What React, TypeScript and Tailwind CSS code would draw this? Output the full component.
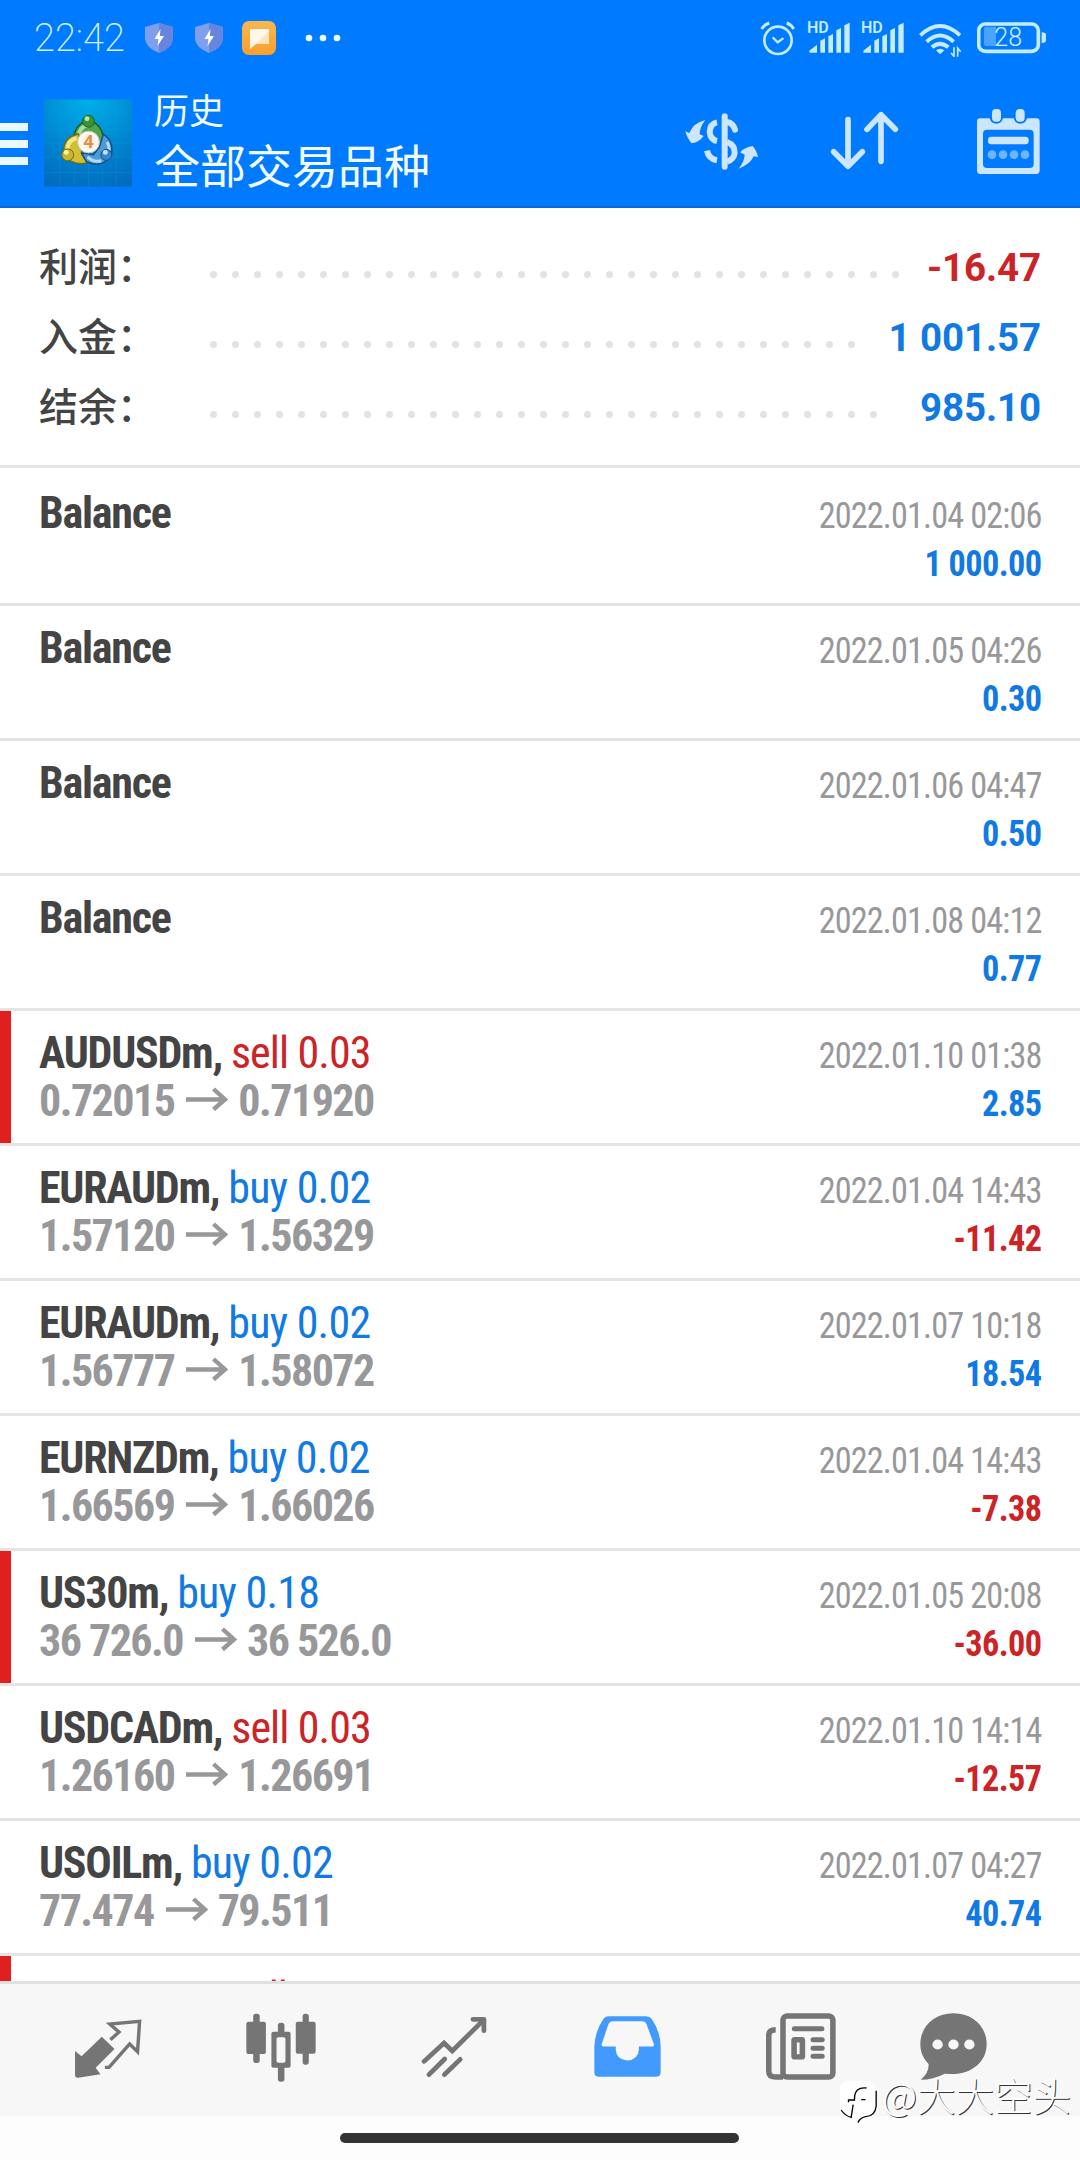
import React, { ReactNode } from "react";

type Deal = {
  symbol: string;
  side?: "buy" | "sell";
  volume?: string;
  open?: string;
  close?: string;
  time: string;
  profit: string;
  marked?: boolean;
};

const deals: Deal[] = [
  { symbol: "Balance", time: "2022.01.04 02:06", profit: "1 000.00" },
  { symbol: "Balance", time: "2022.01.05 04:26", profit: "0.30" },
  { symbol: "Balance", time: "2022.01.06 04:47", profit: "0.50" },
  { symbol: "Balance", time: "2022.01.08 04:12", profit: "0.77" },
  { symbol: "AUDUSDm", side: "sell", volume: "0.03", open: "0.72015", close: "0.71920", time: "2022.01.10 01:38", profit: "2.85", marked: true },
  { symbol: "EURAUDm", side: "buy", volume: "0.02", open: "1.57120", close: "1.56329", time: "2022.01.04 14:43", profit: "-11.42" },
  { symbol: "EURAUDm", side: "buy", volume: "0.02", open: "1.56777", close: "1.58072", time: "2022.01.07 10:18", profit: "18.54" },
  { symbol: "EURNZDm", side: "buy", volume: "0.02", open: "1.66569", close: "1.66026", time: "2022.01.04 14:43", profit: "-7.38" },
  { symbol: "US30m", side: "buy", volume: "0.18", open: "36 726.0", close: "36 526.0", time: "2022.01.05 20:08", profit: "-36.00", marked: true },
  { symbol: "USDCADm", side: "sell", volume: "0.03", open: "1.26160", close: "1.26691", time: "2022.01.10 14:14", profit: "-12.57" },
  { symbol: "USOILm", side: "buy", volume: "0.02", open: "77.474", close: "79.511", time: "2022.01.07 04:27", profit: "40.74" },
];

const summary = [
  { label: "利润：", value: "-16.47", dots: 32 },
  { label: "入金：", value: "1 001.57", dots: 30 },
  { label: "结余：", value: "985.10", dots: 31 },
];

const amountColor = (value: string) => (value.startsWith("-") ? "text-[#cc2327]" : "text-[#117ae2]");

const Shield = () => (
  <svg width="28" height="30" viewBox="0 0 28 30">
    <path d="M14 0 28 4V16Q27 25 14 30Q1 25 0 16V4Z" fill="#7f9eee" />
    <path d="M14 0 28 4V16Q27 25 14 30Z" fill="#6585de" />
    <path d="M15.500 6 9.500 16H13.500L12.500 23 19 13H14.800Z" fill="#fff" />
  </svg>
);

const Signal = () => (
  <svg className="overflow-visible" width="42" height="32" viewBox="503 62 126 96" fill="#c3ecff">
    <text x="500" y="99" fontSize="48" fontWeight="600" fontFamily="Roboto, sans-serif">HD</text>
    <path d="M507 157V151L530 133V157ZM540 157V121L554 114V157ZM564 157V108L578 101V157ZM588 157V90L602 83V157ZM612 157V75L628 67V157Z" />
  </svg>
);

const StatusBar = () => (
  <div className="flex h-[76px] items-center pl-[34px] pr-[33px]">
    <span className="w-[111px] font-[Roboto,sans-serif] text-[38px] font-extralight leading-[76px] text-[#d5f3ff]">22:42</span>
    <Shield />
    <div className="w-[22px]" />
    <Shield />
    <svg className="ml-[19px]" width="34" height="34" viewBox="0 0 34 34">
      <defs>
        <linearGradient id="note" x1="0" y1="0" x2="0" y2="1">
          <stop offset="0" stopColor="#f7b84e" />
          <stop offset="1" stopColor="#fb9f2c" />
        </linearGradient>
      </defs>
      <rect width="34" height="34" rx="7" fill="url(#note)" />
      <path d="M8 9Q8 8 9 8H26Q27 8 27 9V22Q27 23 26 23H14L8 28Z" fill="#fff8ea" />
      <path d="M27 10V22Q27 23 26 23H14Z" fill="#fde3bb" />
    </svg>
    <svg className="ml-[29px]" width="36" height="8" viewBox="0 0 36 8" fill="#eafcff">
      <circle cx="4" cy="4" r="3.300" />
      <circle cx="18" cy="4" r="3.300" />
      <circle cx="32" cy="4" r="3.300" />
    </svg>
    <div className="flex-1" />
    <svg width="35" height="35" viewBox="360 62 105 105" fill="none" stroke="#c3ecff" strokeWidth="9" strokeLinecap="round">
      <circle cx="414" cy="120" r="41" strokeWidth="8" />
      <path d="M400 113 413 126 428 115" strokeWidth="7" strokeLinejoin="round" />
      <path d="M365 86Q372 73 388 68M440 68Q454 73 461 86" strokeLinecap="butt" />
    </svg>
    <div className="-mt-[3px] ml-[13px] flex gap-3">
      <Signal />
      <Signal />
    </div>
    <svg className="ml-[15px] mt-[3px]" width="43" height="34" viewBox="837 66 129 102" fill="none" stroke="#c3ecff" strokeWidth="11">
      <path d="M841 103Q900 47 960 103" />
      <path d="M860 122Q900 85 941 122" strokeWidth="12" />
      <path d="M876 139Q900 118 925 139" strokeWidth="12" />
      <path d="M888 148Q900 139 913 148L900 160Z" fill="#c3ecff" stroke="none" />
      <path d="M942 139V166L933 156M953 167V141L962 152" strokeWidth="5" />
    </svg>
    <svg className="ml-[15px]" width="70" height="32" viewBox="1009 67 210 96">
      <rect x="1014" y="73" width="179" height="82" rx="20" fill="none" stroke="#c3ecff" strokeWidth="11" />
      <path d="M1034 81H1066V139H1034Q1030 139 1030 130V90Q1030 81 1034 81Z" fill="#4aa3ff" />
      <path d="M1203 98Q1216 98 1216 106V122Q1216 130 1203 130Z" fill="#c3ecff" />
      <text x="1061" y="138" fontSize="75" fontWeight="300" fontFamily="Roboto, sans-serif" fill="#d5f3ff">28</text>
    </svg>
  </div>
);

const AppLogo = () => (
  <svg className="ml-4 mt-1" width="88" height="88" viewBox="0 0 89 88">
    <defs>
      <radialGradient id="logoBg" cx="0.5" cy="0" r="1.100">
        <stop offset="0" stopColor="#00b0ea" />
        <stop offset="0.550" stopColor="#0086d0" />
        <stop offset="1" stopColor="#0069bd" />
      </radialGradient>
    </defs>
    <rect width="89" height="88" fill="url(#logoBg)" />
    <path d="M0 30H89M0 44H89M0 58H89M0 74H89M16 0V88M31 0V88M45 0V88M59 0V88M73 0V88" stroke="#2ba0dc" strokeWidth="0.600" opacity="0.400" />
    <g strokeLinejoin="round">
      <path d="M29 46Q30 23 45 22Q60 23 61 46L52 50 45 40 37 46Z" fill="#4fa548" stroke="#1d5b2e" strokeWidth="1.500" />
      <path d="M35 37Q36 27 45 26" fill="none" stroke="#a9db9a" strokeWidth="4" />
      <path d="M20 56Q18 38 35 35L38 46 38 55 44 64Q30 68 20 56Z" fill="#d2bf35" stroke="#6b6a1e" strokeWidth="1.500" />
      <path d="M24 50Q24 41 33 39" fill="none" stroke="#f2ea8a" strokeWidth="4" />
      <path d="M60 35Q71 42 68 57Q58 70 43 63L38 54 50 56 56 48Z" fill="#4b9bd8" stroke="#174e85" strokeWidth="1.500" />
      <path d="M64 43Q67 50 65 55M44 58Q50 64 58 62" fill="none" stroke="#b4ddf6" strokeWidth="3" />
    </g>
    <circle cx="45" cy="22" r="6" fill="#3b9433" stroke="#1d5b2e" />
    <circle cx="43.500" cy="19.500" r="2.500" fill="#b9e59e" />
    <circle cx="24" cy="56" r="6" fill="#cdb529" stroke="#6b6a1e" />
    <circle cx="22.500" cy="53.500" r="2.500" fill="#fbf3a5" />
    <circle cx="63" cy="56" r="5.500" fill="#3487cf" stroke="#174e85" />
    <circle cx="62" cy="53.500" r="2.500" fill="#c1e4fa" />
    <circle cx="45" cy="43" r="11" fill="#fbf6f1" stroke="#c9c3b0" />
    <text x="45" y="49.500" textAnchor="middle" fontSize="18" fontWeight="700" fontFamily="Open Sans, sans-serif" fill="#f08a3c">4</text>
  </svg>
);

const Header = () => (
  <header className="h-[208px] border-b-2 border-[#0a6ad8] bg-[#007aff] font-stretch-normal">
    <StatusBar />
    <div className="flex h-[130px] items-center pr-[38px]">
      <div className="mt-[6px] flex w-7 flex-col gap-[9.500px]">
        <div className="h-[7.500px] bg-[#e9f9ff]" />
        <div className="h-[7.500px] bg-[#e9f9ff]" />
        <div className="h-[7.500px] bg-[#e9f9ff]" />
      </div>
      <AppLogo />
      <div className="-mt-2 ml-[22px] flex-1 font-['Noto_Sans_CJK_SC',sans-serif] text-[#f0fcff]">
        <div className="text-[35px] leading-[52px]">历史</div>
        <div className="text-[46px] leading-[57px]">全部交易品种</div>
      </div>
      {/* currency converter */}
      <svg width="74" height="57" viewBox="136 336 222 171" fill="#cde6ff">
        <path d="M137 391 149 396Q160 366 197 357Q180 378 180 400L192 405Q178 424 156 427Q143 413 137 391Z" />
        <path d="M355 468 342 466Q332 490 297 503Q314 482 315 461L301 454Q318 437 339 435Q350 447 355 468Z" />
        <g fill="none" stroke="#cde6ff" strokeWidth="18">
          <path d="M232 364Q211 368 210 393Q212 416 232 420" />
          <path d="M202 449Q207 474 232 478" strokeLinecap="butt" />
          <path d="M262 363Q280 366 286 386" strokeLinecap="round" />
          <path d="M262 423Q286 432 285 456Q283 475 262 482" />
          <path d="M255 346V497" strokeLinecap="round" />
        </g>
      </svg>
      <svg className="ml-[71px]" width="69" height="60" viewBox="572 336 207 180" fill="none" stroke="#cde6ff" strokeWidth="17" strokeLinecap="round" strokeLinejoin="round">
        <path d="M626 362V500M583 458 626 502 669 458" />
        <path d="M725 487V350M683 391 725 347 768 391" />
      </svg>
      <svg className="ml-[77px] mt-0.5" width="66" height="68" viewBox="1007 323 198 204">
        <path fillRule="evenodd" d="M1020 354H1048Q1052 370 1068 370Q1084 370 1088 354H1120Q1124 370 1140 370Q1156 370 1160 354H1188Q1198 354 1198 364V510Q1198 521 1188 521H1020Q1010 521 1010 510V364Q1010 354 1020 354ZM1040 388Q1028 388 1028 400V490Q1028 503 1040 503H1168Q1180 503 1180 490V400Q1180 388 1168 388Z" fill="#cde6ff" />
        <rect x="1055" y="326" width="27" height="38" rx="12" fill="#cde6ff" />
        <rect x="1126" y="326" width="27" height="38" rx="12" fill="#cde6ff" />
        <rect x="1043" y="409" width="122" height="23" rx="10" fill="#cde6ff" />
        <g fill="#6db6ff">
          <circle cx="1055" cy="463" r="13" />
          <circle cx="1088" cy="463" r="13" />
          <circle cx="1121" cy="463" r="13" />
          <circle cx="1154" cy="463" r="13" />
        </g>
      </svg>
    </div>
  </header>
);

const Summary = () => (
  <section className="h-[260px] border-b-[3px] border-[#e4e4e4] px-[39px] pt-[24px] font-stretch-normal">
    {summary.map((row) => (
      <div key={row.label} className="flex h-[70px] items-center">
        <span className="-mt-[7px] w-[171px] font-['Noto_Sans_CJK_SC',sans-serif] text-[39px] font-medium leading-[70px] text-[#444]">{row.label}</span>
        <div className="mt-[15px] flex gap-[15px]">
          {Array.from({ length: row.dots }, (_, i) => (
            <span key={i} className="size-[7px] rounded-full bg-[#e2e2e2]" />
          ))}
        </div>
        <span className={`mt-[2px] flex-1 text-right font-[Roboto,sans-serif] text-[38.500px] font-bold leading-[70px] tracking-[-0.100px] ${amountColor(row.value)}`}>{row.value}</span>
      </div>
    ))}
  </section>
);

const Arrow = () => (
  <svg className="ml-[12px] mr-[10px] -mt-1" width="42" height="24" viewBox="0 0 42 24" fill="none" stroke="#98989b" strokeWidth="4.400">
    <path d="M0 12.500H39M27.500 2 39 12.500 27.500 22.500" />
  </svg>
);

const DealRow = ({ deal }: { deal: Deal }) => (
  <li className="flex h-[135px] border-b-[3px] border-[#e4e4e4]">
    <div className={deal.marked ? "w-[11px] bg-[#e01f1f]" : "w-[11px]"} />
    <div className="flex-1 pl-7 pt-[18px] text-[44px] leading-[48px]">
      <div className="whitespace-pre">
        <span className="font-bold tracking-[-1.250px] text-[#444]">{deal.side ? deal.symbol + ", " : deal.symbol}</span>
        {deal.side && (
          <span className={deal.side === "buy" ? "tracking-[-0.750px] text-[#117ae2]" : "tracking-[-0.900px] text-[#cc2327]"}>
            {deal.side + " " + deal.volume}
          </span>
        )}
      </div>
      {deal.open && (
        <div className="flex items-center font-bold tracking-[-1.550px] text-[#98989b]">
          {deal.open}
          <Arrow />
          {deal.close}
        </div>
      )}
    </div>
    <div className="mr-[38px] origin-right scale-x-95 pt-[21px] text-right text-[36px] leading-[48px]">
      <div className="tracking-[-0.900px] text-[#98989b]">{deal.time}</div>
      <div className={`font-bold tracking-[-0.600px] ${amountColor(deal.profit)}`}>{deal.profit}</div>
    </div>
  </li>
);

const Tab = ({ children }: { children: ReactNode }) => (
  <button className="flex w-[173px] justify-center">{children}</button>
);

const TabBar = () => (
  <nav className="flex h-[135px] border-t-[3px] border-[#e1e1e1] bg-[#f7f7f7] pl-[22px] pt-[29px]">
    <Tab>
      <svg className="-ml-0.5 mt-[6px]" width="68" height="60" viewBox="216 235 198 180" preserveAspectRatio="none" fill="#757575">
        <path d="M219 331 238 347 297 288 334 325 279 381 293 401 228 411Q219 412 219 402Z" />
        <path d="M322 297 347 274 320 250 407 242 401 333 378 310 318 380H306" fill="none" stroke="#757575" strokeWidth="10" />
      </svg>
    </Tab>
    <Tab>
      <svg className="-ml-px" width="70" height="69" viewBox="714 220 204 207" preserveAspectRatio="none" fill="#757575">
        <rect x="715" y="246" width="57" height="97" rx="6" />
        <rect x="735" y="222" width="19" height="148" rx="8" />
        <rect x="859" y="246" width="58" height="96" rx="6" />
        <rect x="879" y="222" width="18" height="153" rx="8" />
        <rect x="807" y="249" width="19" height="177" rx="8" />
        <rect x="788" y="276" width="56" height="108" rx="6" />
        <rect x="803" y="293" width="26" height="76" rx="5" fill="#f7f7f7" />
      </svg>
    </Tab>
    <Tab>
      <svg className="-ml-0.5 mt-[3px]" width="66" height="62" viewBox="1222 228 192 186" preserveAspectRatio="none" fill="none" stroke="#757575" strokeWidth="14" strokeLinecap="round">
        <path d="M1231 364 1289 309 1313 333 1403 241" />
        <path d="M1373 238H1405V272" strokeLinejoin="round" />
        <path d="M1245 404 1291 357M1290 404 1336 358" />
      </svg>
    </Tab>
    <Tab>
      <svg className="mt-[3px]" width="67" height="61" viewBox="157 230 194 182" preserveAspectRatio="none" fill="#429aff">
        <path fillRule="evenodd" d="M198 231H308Q318 231 324 239Q349 275 350 320V398Q350 411 338 411H170Q158 411 158 398V320Q160 275 184 239Q189 231 198 231ZM210 246Q202 246 199 254L179 314Q178 321 184 321H220V330Q221 360 253 363Q285 361 287 330V321H325Q332 321 330 313L309 254Q306 246 297 246Z" />
      </svg>
    </Tab>
    <Tab>
      <svg width="70" height="67" viewBox="657 221 202 200" preserveAspectRatio="none" fill="none" stroke="#757575" strokeWidth="16">
        <rect x="706" y="230" width="144" height="182" rx="12" />
        <path d="M685 271Q665 271 665 288V395Q665 412 683 412H706" />
        <g strokeLinecap="round" strokeWidth="15">
          <path d="M739 268H818M793 301H819M793 326H819M793 350H819" />
        </g>
        <rect x="738" y="301" width="24" height="51" rx="2" />
      </svg>
    </Tab>
    <button className="flex w-[132px] justify-center">
      <svg width="67" height="67" viewBox="1102 221 194 200" preserveAspectRatio="none" fill="#757575">
        <path d="M1199 222C1255 222 1295 262 1295 314C1295 366 1250 411 1174 402Q1140 420 1104 420Q1128 400 1127 373C1113 358 1103 340 1103 314C1103 262 1143 222 1199 222Z" />
        <g fill="#f7f7f7">
          <circle cx="1153" cy="315" r="15" />
          <circle cx="1199" cy="315" r="15" />
          <circle cx="1245" cy="315" r="15" />
        </g>
      </svg>
    </button>
  </nav>
);

const Watermark = () => (
  <div className="absolute bottom-[36px] right-[9px] flex items-start">
    <svg className="mr-[4px]" width="39" height="44" viewBox="28 60 116 132">
      <path d="M62 62H106Q138 62 138 94V132Q138 166 108 168Q92 170 84 184V172H62Q30 172 30 138V94Q30 62 62 62Z" fill="#fff" />
      <path d="M139 92V138Q136 168 108 170Q92 172 84 188" fill="none" stroke="#000" strokeWidth="4" />
      <path d="M110 84Q74 80 74 116V120M56 127V120H76M94 119H107M70 134 64 172Q46 168 34 150" fill="none" stroke="#000" strokeWidth="4" />
    </svg>
    <span className="-mt-[9px] font-['Noto_Sans_CJK_SC',sans-serif] text-[38.500px] font-light leading-[46px] text-white [text-shadow:1px_1px_0_#333]">@大大空头</span>
  </div>
);

const App = () => {
  return (
    <div className="relative flex h-[2160px] w-[1080px] flex-col overflow-hidden bg-white font-[Roboto_Condensed,Roboto,sans-serif] font-stretch-condensed">
      <Header />
      <Summary />
      <ul className="h-[1513px] overflow-hidden pt-[3px]">
        {deals.map((deal, i) => (
          <DealRow key={i} deal={deal} />
        ))}
        <li className="flex h-[25px] overflow-hidden">
          <div className="w-[11px] bg-[#e01f1f]" />
          <div className="whitespace-pre pl-7 pt-[18px] text-[44px] leading-[48px] tracking-[-1.250px]">
            <span className="font-bold text-[#444]">XAUUSDm, </span>
            <span className="text-[#cc2327]">sell</span>
          </div>
        </li>
      </ul>
      <TabBar />
      <div className="flex h-[44px] justify-center bg-[#fdfdfd] pr-0.5 pt-[17px]">
        <div className="h-[10px] w-[399px] rounded-full bg-[#333]" />
      </div>
      <Watermark />
    </div>
  );
};

export default App;
